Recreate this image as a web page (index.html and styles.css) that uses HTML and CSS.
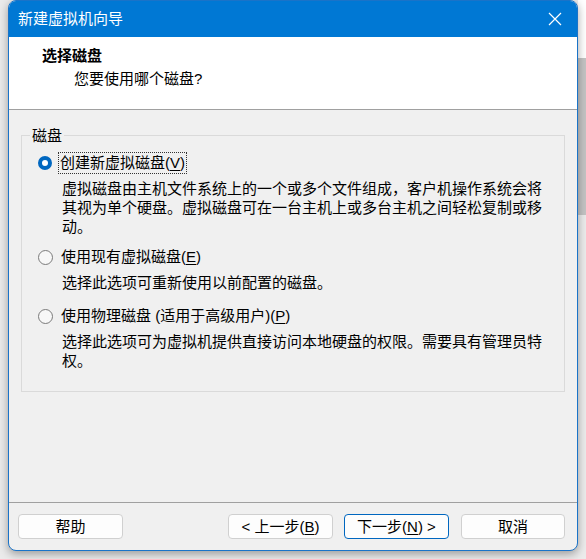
FILE: index.html
```html
<!DOCTYPE html>
<html lang="zh-CN">
<head>
<meta charset="utf-8">
<title>新建虚拟机向导</title>
<link rel="stylesheet" href="styles.css">
</head>
<body>
<div class="window">
  <div class="titlebar">
    <span class="title">新建虚拟机向导</span>
    <svg class="close" width="14" height="14" viewBox="0 0 14 14"><path d="M1 1L13 13M13 1L1 13" stroke="#fff" stroke-width="1.2" fill="none"/></svg>
  </div>
  <div class="header">
    <div class="h-title">选择磁盘</div>
    <div class="h-sub">您要使用哪个磁盘?</div>
  </div>
  <div class="content">
    <fieldset class="group">
      <legend class="legend">磁盘</legend>
      <div class="option first">
        <span class="radio checked"></span>
        <span class="label focus">创建新虚拟磁盘(<u>V</u>)</span>
      </div>
      <p class="desc">虚拟磁盘由主机文件系统上的一个或多个文件组成，客户机操作系统会将其视为单个硬盘。虚拟磁盘可在一台主机上或多台主机之间轻松复制或移动。</p>
      <div class="option second">
        <span class="radio"></span>
        <span class="label">使用现有虚拟磁盘(<u>E</u>)</span>
      </div>
      <p class="desc">选择此选项可重新使用以前配置的磁盘。</p>
      <div class="option third">
        <span class="radio"></span>
        <span class="label">使用物理磁盘 (适用于高级用户)(<u>P</u>)</span>
      </div>
      <p class="desc">选择此选项可为虚拟机提供直接访问本地硬盘的权限。需要具有管理员特权。</p>
    </fieldset>
  </div>
  <div class="footer">
    <button class="btn help">帮助</button>
    <div class="nav">
      <button class="btn">&lt; 上一步(<u>B</u>)</button>
      <button class="btn default">下一步(<u>N</u>) &gt;</button>
      <button class="btn cancel">取消</button>
    </div>
  </div>
</div>
</body>
</html>
```

FILE: styles.css
```css
html {
  background: linear-gradient(to bottom, #ffffff 0 58px, #c4c4c4 58px 215px, #ececec 215px) right top / 8px 100% no-repeat, #ebebeb;
}
body {
  margin: 0;
  padding: 0 0 0 8px;
  height: 559px;
  overflow: hidden;
  font-family: "Liberation Sans", "Noto Sans CJK SC", sans-serif;
  font-size: 15px;
  color: #000;
}
.window {
  width: 568px;
  height: 549px;
  border: 1px solid #1a73c8;
  border-radius: 8px;
  background: #f0f0f0;
  box-shadow: 0 3px 10px rgba(0, 0, 0, 0.35);
  overflow: hidden;
  display: flex;
  flex-direction: column;
}
.titlebar {
  height: 36px;
  flex: none;
  background: #0078d4;
  color: #fff;
  display: flex;
  align-items: center;
  justify-content: space-between;
  padding: 0 15px 0 9px;
}
.title {
  font-size: 15px;
  line-height: 20px;
  padding-bottom: 1px;
}
.close {
  display: block;
}
.header {
  flex: none;
  background: #fff;
  border-bottom: 1px solid #a0a0a0;
  padding: 0 0 0 33px;
  box-sizing: border-box;
  height: 73px;
}
.h-title {
  font-weight: bold;
  line-height: 20px;
  margin-top: 9px;
}
.h-sub {
  line-height: 20px;
  margin-top: 3px;
  padding-left: 32px;
}
.content {
  flex: 1;
  padding: 16px 12px 0 12px;
}
.group {
  margin: 0;
  border: 1px solid #dadada;
  padding: 0 0 0 8px;
  height: 266px;
  box-sizing: border-box;
}
.legend {
  padding: 0 2px;
  line-height: 19px;
}
.option {
  display: flex;
  align-items: center;
  height: 20px;
  padding-left: 8px;
}
.option.first { margin-top: 8px; }
.option.second { margin-top: 11px; }
.option.third { margin-top: 14px; }
.radio {
  width: 13px;
  height: 13px;
  border-radius: 50%;
  border: 1px solid #7a7a7a;
  background: #f7f7f7;
  flex: none;
  margin-right: 6px;
}
.radio.checked {
  width: 6px;
  height: 6px;
  border: 4px solid #0067c0;
  background: #fff;
}
.label {
  line-height: 20px;
  padding: 0 1px;
  border: 1px dotted transparent;
}
.label.focus {
  border-color: #333;
}
u {
  text-decoration: underline;
  text-underline-offset: 2px;
}
.desc {
  margin: 6px 10px 0 32px;
  line-height: 19px;
}
.footer {
  flex: none;
  height: 48px;
  border-top: 1px solid #a0a0a0;
  display: flex;
  align-items: flex-start;
  justify-content: space-between;
  padding: 11px 12px 0 9px;
  box-sizing: border-box;
}
.nav {
  display: flex;
  gap: 11px;
}
.btn {
  width: 105px;
  height: 25px;
  border: 1px solid #d0d0d0;
  border-radius: 4px;
  background: #fdfdfd;
  font-family: "Liberation Sans", "Noto Sans CJK SC", sans-serif;
  font-size: 15px;
  color: #000;
  padding: 0;
  line-height: 22px;
}
.btn.default {
  border-color: #0067c0;
}
.btn.cancel {
  margin-left: 1px;
  width: 104px;
}
```
